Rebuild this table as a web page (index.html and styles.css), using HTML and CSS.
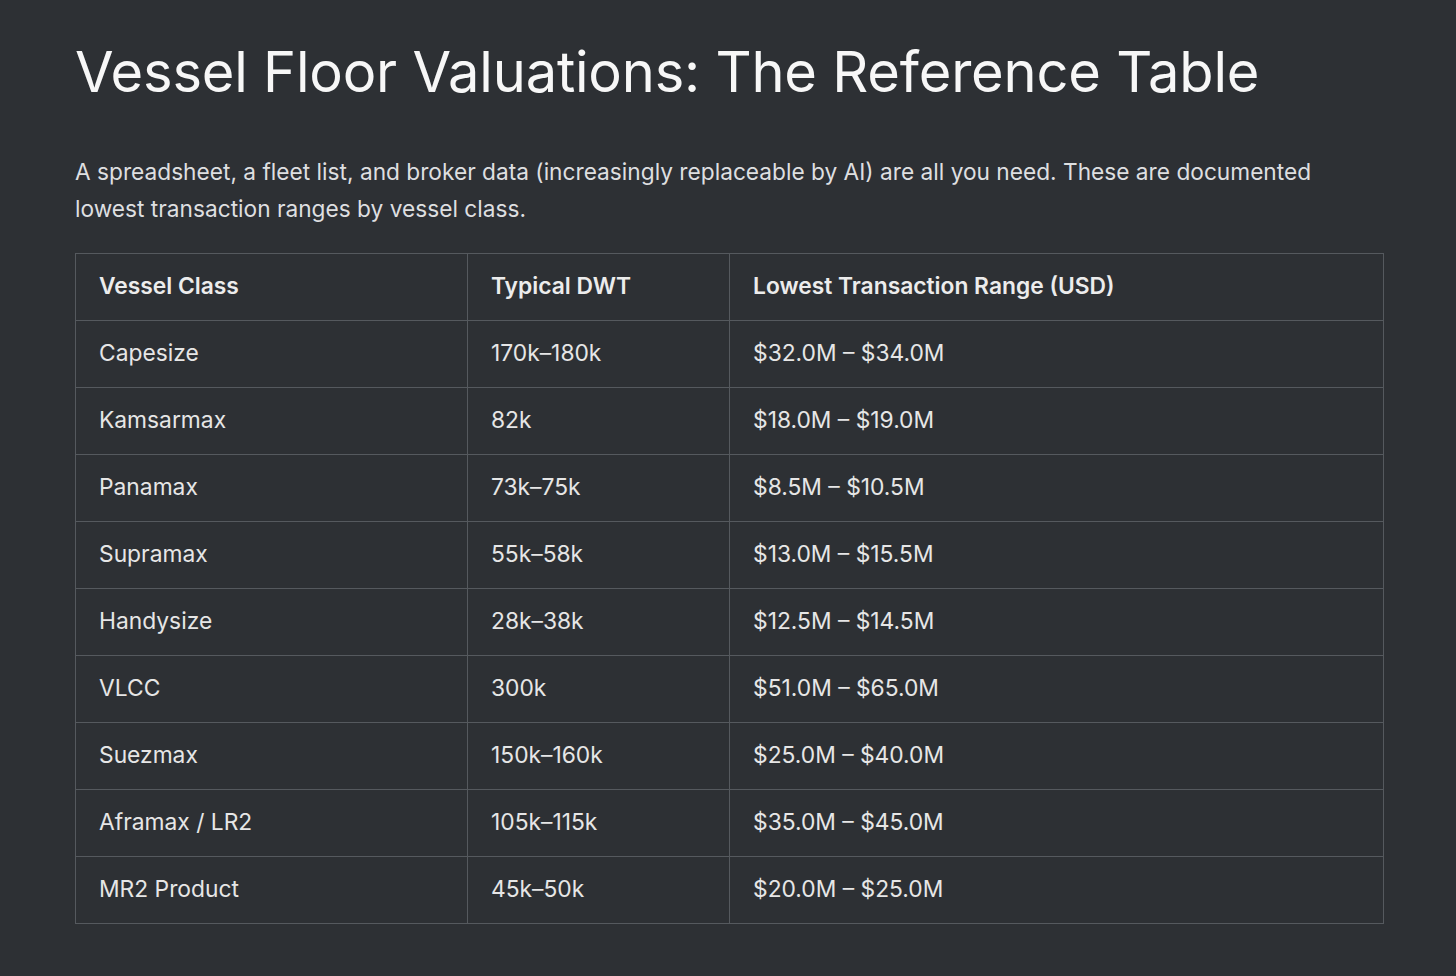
FILE: index.html
```html
<!DOCTYPE html>
<html lang="en">
<head>
<meta charset="utf-8">
<title>Vessel Floor Valuations</title>
<link rel="stylesheet" href="styles.css">
</head>
<body>
<main class="page">
  <h1 class="title">Vessel Floor Valuations: The Reference Table</h1>
  <p class="intro">A spreadsheet, a fleet list, and broker data (increasingly replaceable by AI) are all you need. These are documented lowest transaction ranges by vessel class.</p>
  <table class="vtable">
    <colgroup>
      <col class="c1"><col class="c2"><col class="c3">
    </colgroup>
    <thead>
      <tr><th>Vessel Class</th><th>Typical DWT</th><th>Lowest Transaction Range (USD)</th></tr>
    </thead>
    <tbody>
      <tr><td>Capesize</td><td>170k–180k</td><td>$32.0M – $34.0M</td></tr>
      <tr><td>Kamsarmax</td><td>82k</td><td>$18.0M – $19.0M</td></tr>
      <tr><td>Panamax</td><td>73k–75k</td><td>$8.5M – $10.5M</td></tr>
      <tr><td>Supramax</td><td>55k–58k</td><td>$13.0M – $15.5M</td></tr>
      <tr><td>Handysize</td><td>28k–38k</td><td>$12.5M – $14.5M</td></tr>
      <tr><td>VLCC</td><td>300k</td><td>$51.0M – $65.0M</td></tr>
      <tr><td>Suezmax</td><td>150k–160k</td><td>$25.0M – $40.0M</td></tr>
      <tr><td>Aframax / LR2</td><td>105k–115k</td><td>$35.0M – $45.0M</td></tr>
      <tr><td>MR2 Product</td><td>45k–50k</td><td>$20.0M – $25.0M</td></tr>
    </tbody>
  </table>
</main>
</body>
</html>
```
FILE: styles.css
```css
html, body {
  margin: 0;
  padding: 0;
  background: #2d3034;
}
body {
  font-family: Inter, "Noto Sans", "Liberation Sans", sans-serif;
  color: #e8e8e8;
}
.page {
  padding: 39px 60px 0 75px;
}
.title {
  margin: 0;
  font-size: 56px;
  line-height: 67px;
  font-weight: 400;
  color: #f7f7f7;
  letter-spacing: -0.2px;
}
.intro {
  margin: 47px 0 26px 0;
  font-size: 22.7px;
  line-height: 37px;
  color: #dedfe0;
  max-width: 1300px;
}
.vtable {
  width: 1308px;
  border-collapse: collapse;
  table-layout: fixed;
  font-size: 22.8px;
  color: #e6e6e6;
}
.c1 { width: 392px; }
.c2 { width: 262px; }
.c3 { width: 654px; }
.vtable th,
.vtable td {
  border: 1px solid #55595e;
  height: 67px;
  padding: 0 23px 4px 23px;
  text-align: left;
  vertical-align: middle;
  box-sizing: border-box;
}
.vtable th {
  font-weight: 600;
  color: #ececec;
}
```
